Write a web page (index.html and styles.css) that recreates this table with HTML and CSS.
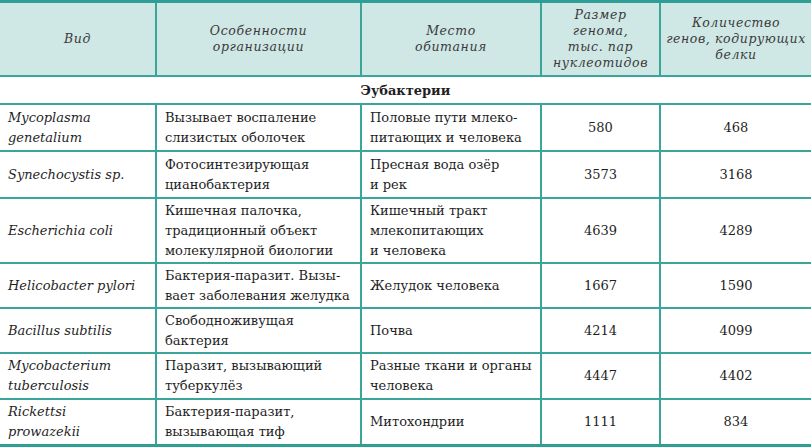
FILE: index.html
```html
<!DOCTYPE html>
<html lang="ru">
<head>
<meta charset="utf-8">
<link rel="stylesheet" href="styles.css">
</head>
<body>
<table class="tbl">
  <colgroup>
    <col class="c1"><col class="c2"><col class="c3"><col class="c4"><col class="c5">
  </colgroup>
  <thead>
    <tr class="head">
      <th>Вид</th>
      <th>Особенности<br>организации</th>
      <th>Место<br>обитания</th>
      <th>Размер<br>генома,<br>тыс. пар<br>нуклеотидов</th>
      <th>Количество<br>генов, кодирующих<br>белки</th>
    </tr>
  </thead>
  <tbody>
    <tr class="section"><td colspan="5">Эубактерии</td></tr>
    <tr class="ra">
      <td class="sp">Mycoplasma<br>genetalium</td>
      <td>Вызывает воспаление<br>слизистых оболочек</td>
      <td>Половые пути млеко-<br>питающих и человека</td>
      <td class="num">580</td>
      <td class="num">468</td>
    </tr>
    <tr class="ra">
      <td class="sp">Synechocystis sp.</td>
      <td>Фотосинтезирующая<br>цианобактерия</td>
      <td>Пресная вода озёр<br>и рек</td>
      <td class="num">3573</td>
      <td class="num">3168</td>
    </tr>
    <tr class="r3">
      <td class="sp">Escherichia coli</td>
      <td>Кишечная палочка,<br>традиционный объект<br>молекулярной биологии</td>
      <td>Кишечный тракт<br>млекопитающих<br>и человека</td>
      <td class="num">4639</td>
      <td class="num">4289</td>
    </tr>
    <tr class="rb">
      <td class="sp">Helicobacter pylori</td>
      <td>Бактерия-паразит. Вызы-<br>вает заболевания желудка</td>
      <td>Желудок человека</td>
      <td class="num">1667</td>
      <td class="num">1590</td>
    </tr>
    <tr class="rb">
      <td class="sp">Bacillus subtilis</td>
      <td>Свободноживущая<br>бактерия</td>
      <td>Почва</td>
      <td class="num">4214</td>
      <td class="num">4099</td>
    </tr>
    <tr class="rc">
      <td class="sp">Mycobacterium<br>tuberculosis</td>
      <td>Паразит, вызывающий<br>туберкулёз</td>
      <td>Разные ткани и органы<br>человека</td>
      <td class="num">4447</td>
      <td class="num">4402</td>
    </tr>
    <tr class="rc">
      <td class="sp">Rickettsi<br>prowazekii</td>
      <td>Бактерия-паразит,<br>вызывающая тиф</td>
      <td>Митохондрии</td>
      <td class="num">1111</td>
      <td class="num">834</td>
    </tr>
  </tbody>
</table>
</body>
</html>
```
FILE: styles.css
```css
html, body {
  margin: 0;
  padding: 0;
  background: #ffffff;
}
body {
  font-family: "DejaVu Serif", "Liberation Serif", serif;
  color: #1f1f1f;
  width: 811px;
  height: 448px;
  overflow: hidden;
}
.tbl {
  width: 811px;
  border-collapse: collapse;
  table-layout: fixed;
  border-top: 3px solid #2f9f95;
  border-bottom: 3px solid #2f9f95;
}
.c1 { width: 156px; }
.c2 { width: 205px; }
.c3 { width: 180px; }
.c4 { width: 119px; }
.c5 { width: 151px; }
.tbl th,
.tbl td {
  border: 2px solid #3aa59b;
  padding: 0 8px;
  vertical-align: middle;
  text-align: left;
  font-size: 13px;
  line-height: 20px;
  white-space: nowrap;
  overflow: hidden;
}
.tbl tr > *:first-child { border-left: none; }
.tbl tr > *:last-child { border-right: none; }
.head th {
  background: #cfe7e5;
  height: 72px;
  padding: 0 2px;
  font-weight: normal;
  font-style: italic;
  text-align: center;
  color: #3a3a3a;
  font-size: 12.5px;
  line-height: 16px;
  letter-spacing: 0.6px;
}
.section td {
  text-align: center;
  font-weight: bold;
  font-size: 13px;
  height: 24px;
  padding: 2px 0 0;
  border-left: none;
  border-right: none;
}
.sp {
  font-style: italic;
  font-family: "DejaVu Serif", serif;
  font-size: 12.5px;
}
.num {
  text-align: center !important;
}
.ra td { height: 45px; }
.rb td { height: 43px; }
.rc td { height: 44px; }
.r3 td { height: 63px; }
```
